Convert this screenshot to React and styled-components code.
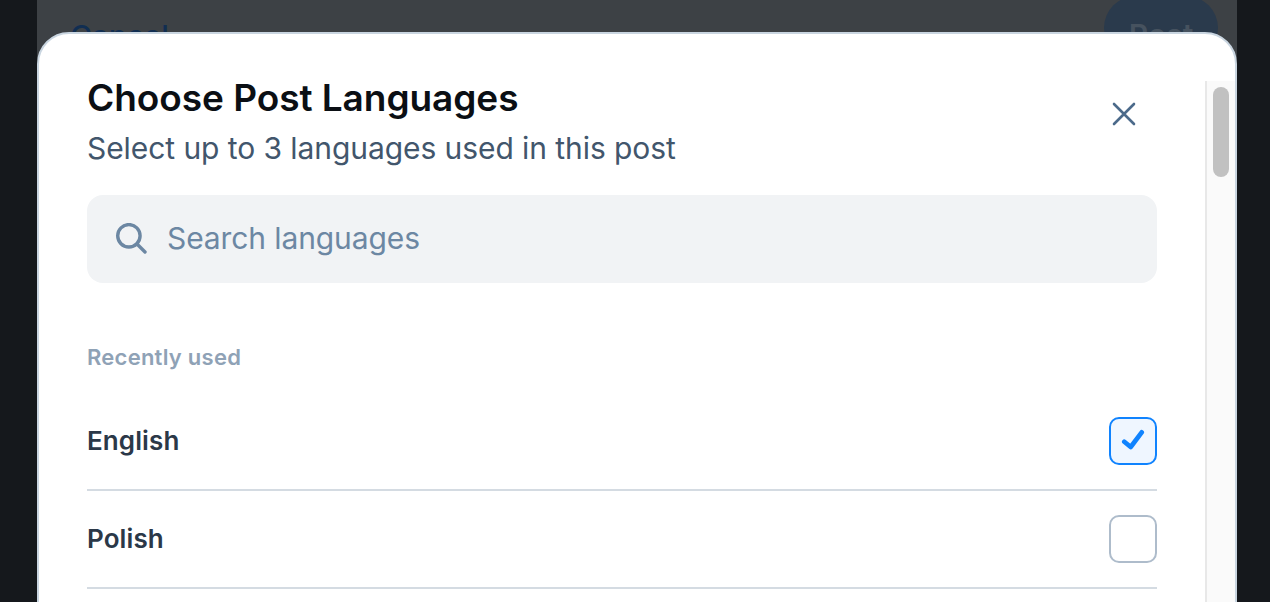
import React from "react";
import styled, { createGlobalStyle } from "styled-components";

const GlobalStyle = createGlobalStyle`
html, body {
  margin: 0;
  height: 100%;
  overflow: hidden;
  background: #15181c;
  font-family: Inter, "Liberation Sans", sans-serif;
}
* { box-sizing: border-box; }
`;

const Page = styled.div`
position: relative;
width: 1270px;
height: 602px;
overflow: hidden;
background: #15181c;
`;

const BehindPanel = styled.div`
width: 1200px;
height: 602px;
margin-left: 37px;
background: #3d4145;
`;

const BehindBar = styled.div`
display: flex;
align-items: flex-start;
justify-content: space-between;
padding: 0 19px 0 33px;
`;

const CancelText = styled.span`
margin-top: 18px;
font-size: 30px;
font-weight: 500;
line-height: 36px;
letter-spacing: -0.15px;
color: #112e52;
`;

const PostButton = styled.div`
width: 114px;
height: 64px;
margin-top: -4px;
padding-top: 21px;
border-radius: 32px;
background: #2a3a4c;
color: #46525f;
font-size: 30px;
font-weight: 600;
line-height: 36px;
text-align: center;
`;

const Modal = styled.div`
position: absolute;
top: 32px;
left: 37px;
width: 1200px;
height: 640px;
display: flex;
background: #fff;
border: 2px solid #c9d5e0;
border-radius: 32px;
overflow: hidden;
`;

const Content = styled.div`
flex: 1;
min-width: 0;
padding: 42px 48px 0 48px;
`;

const Header = styled.div`
display: flex;
justify-content: space-between;
align-items: flex-start;
`;

const Title = styled.h1`
margin: 0;
font-size: 37px;
font-weight: 600;
line-height: 44px;
letter-spacing: -0.05px;
color: #0b0f14;
`;

const Subtitle = styled.p`
margin: 9px 0 0;
font-size: 30px;
font-weight: 400;
line-height: 38px;
letter-spacing: -0.07px;
color: #42566c;
`;

const CloseButton = styled.div`
display: flex;
margin: 25px 20px 0 0;
color: #4b6a8a;
`;

const SearchBox = styled.div`
display: flex;
align-items: center;
gap: 20px;
height: 88px;
margin-top: 28px;
padding-left: 27px;
border-radius: 16px;
background: #f1f3f5;
color: #6c87a3;
font-size: 30px;
letter-spacing: -0.1px;
`;

const SearchText = styled.span`
margin-top: -2px;
`;

const SectionLabel = styled.div`
margin-top: 60px;
font-size: 22px;
font-weight: 600;
line-height: 28px;
letter-spacing: 0.25px;
color: #8fa2b6;
`;

const LanguageList = styled.div`
margin-top: 22px;
`;

const Row = styled.div`
display: flex;
align-items: center;
justify-content: space-between;
height: 98px;
border-bottom: 2px solid #d4dbe2;
font-size: 26px;
font-weight: 600;
letter-spacing: 0.1px;
color: #2b3848;
`;

const RowLabel = styled.span`
margin-top: -2px;
`;

const Checkbox = styled.div`
display: flex;
align-items: center;
justify-content: center;
width: 48px;
height: 48px;
border-radius: 10px;
border: 2px solid ${props => (props.$checked ? "#1083fe" : "#aebccb")};
background: ${props => (props.$checked ? "#eff6ff" : "#fff")};
`;

const ScrollTrack = styled.div`
flex: none;
width: 30px;
margin-top: 47px;
padding: 6px 6px 0 6px;
border-left: 2px solid #e8e8e8;
background: #fafafa;
`;

const ScrollThumb = styled.div`
height: 90px;
border-radius: 8px;
background: #c1c1c1;
`;

const languages = [
  { name: "English", checked: true },
  { name: "Polish", checked: false },
];

function App() {
  return (
    <Page>
      <GlobalStyle />
      <BehindPanel>
        <BehindBar>
          <CancelText>Cancel</CancelText>
          <PostButton>Post</PostButton>
        </BehindBar>
      </BehindPanel>
      <Modal>
        <Content>
          <Header>
            <div>
              <Title>Choose Post Languages</Title>
              <Subtitle>Select up to 3 languages used in this post</Subtitle>
            </div>
            <CloseButton>
              <svg width="26" height="26" viewBox="0 0 26 26" fill="none" stroke="currentColor" strokeWidth="2.6" strokeLinecap="round">
                <path d="M3 3 L23 23 M23 3 L3 23" />
              </svg>
            </CloseButton>
          </Header>
          <SearchBox>
            <svg width="33" height="33" viewBox="0 0 33 33" fill="none" stroke="currentColor" strokeWidth="3.4" strokeLinecap="round">
              <circle cx="14.9" cy="12.8" r="11.2" />
              <path d="M23 21 L31 29" />
            </svg>
            <SearchText>Search languages</SearchText>
          </SearchBox>
          <SectionLabel>Recently used</SectionLabel>
          <LanguageList>
            {languages.map(l => (
              <Row key={l.name}>
                <RowLabel>{l.name}</RowLabel>
                <Checkbox $checked={l.checked}>
                  {l.checked && (
                    <svg width="24" height="24" viewBox="0 0 24 24" fill="none" stroke="#1083fe" strokeWidth="4.7" strokeLinecap="round" strokeLinejoin="round">
                      <path d="M3.3 12.7 L9.7 18 L20.7 3.3" />
                    </svg>
                  )}
                </Checkbox>
              </Row>
            ))}
          </LanguageList>
        </Content>
        <ScrollTrack>
          <ScrollThumb />
        </ScrollTrack>
      </Modal>
    </Page>
  );
}

export default App;
